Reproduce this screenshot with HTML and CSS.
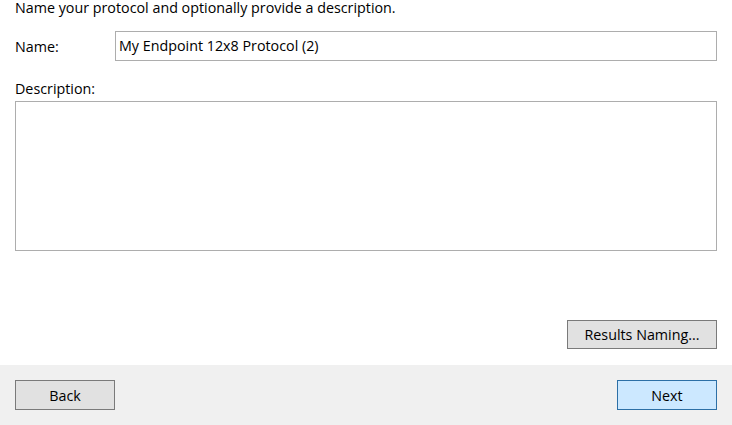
FILE: index.html
```html
<!DOCTYPE html>
<html>
<head>
<meta charset="utf-8">
<link rel="stylesheet" href="styles.css">
</head>
<body>
<div class="page">
  <div class="content">
    <div class="intro">Name your protocol and optionally provide a description.</div>
    <div class="name-row">
      <label class="label name-label">Name:</label>
      <div class="textbox">My Endpoint 12x8 Protocol (2)</div>
    </div>
    <div class="label desc-label">Description:</div>
    <div class="textarea"></div>
    <div class="naming-row">
      <button class="btn naming">Results Naming...</button>
    </div>
  </div>
  <div class="footer">
    <button class="btn nav">Back</button>
    <button class="btn nav primary">Next</button>
  </div>
</div>
</body>
</html>
```

FILE: styles.css
```css
html, body {
  margin: 0;
  padding: 0;
  background: #ffffff;
}
body {
  font-family: "Open Sans", "Noto Sans", sans-serif;
  font-size: 14.3px;
  color: #000000;
}
.page {
  width: 732px;
  height: 425px;
  display: flex;
  flex-direction: column;
}
.content {
  height: 365px;
  padding: 0 15px;
  box-sizing: border-box;
  display: flex;
  flex-direction: column;
}
.intro {
  line-height: 15px;
  height: 15px;
  white-space: nowrap;
}
.name-row {
  margin-top: 16px;
  display: flex;
  align-items: center;
  height: 30px;
}
.name-label {
  width: 100px;
  flex: none;
}
.textbox {
  flex: 1;
  height: 30px;
  box-sizing: border-box;
  border: 1px solid #adadad;
  padding: 0 3px;
  line-height: 28px;
  background: #fff;
}
.desc-label {
  margin-top: 15px;
  line-height: 26px;
  height: 25px;
}
.textarea {
  height: 150px;
  box-sizing: border-box;
  border: 1px solid #adadad;
  background: #fff;
}
.naming-row {
  margin-top: 69px;
  display: flex;
  justify-content: flex-end;
}
.btn {
  font-family: inherit;
  font-size: 14.3px;
  color: #000000;
  background: #e1e1e1;
  border: 1px solid #7a7a7a;
  box-sizing: border-box;
  padding: 0;
  margin: 0;
}
.naming {
  width: 150px;
  height: 29px;
}
.footer {
  height: 60px;
  background: #f0f0f0;
  padding: 15px;
  box-sizing: border-box;
  display: flex;
  justify-content: space-between;
  align-items: flex-start;
}
.nav {
  width: 100px;
  height: 30px;
}
.primary {
  background: #cce8ff;
  border-color: #2c6fa6;
}
```
